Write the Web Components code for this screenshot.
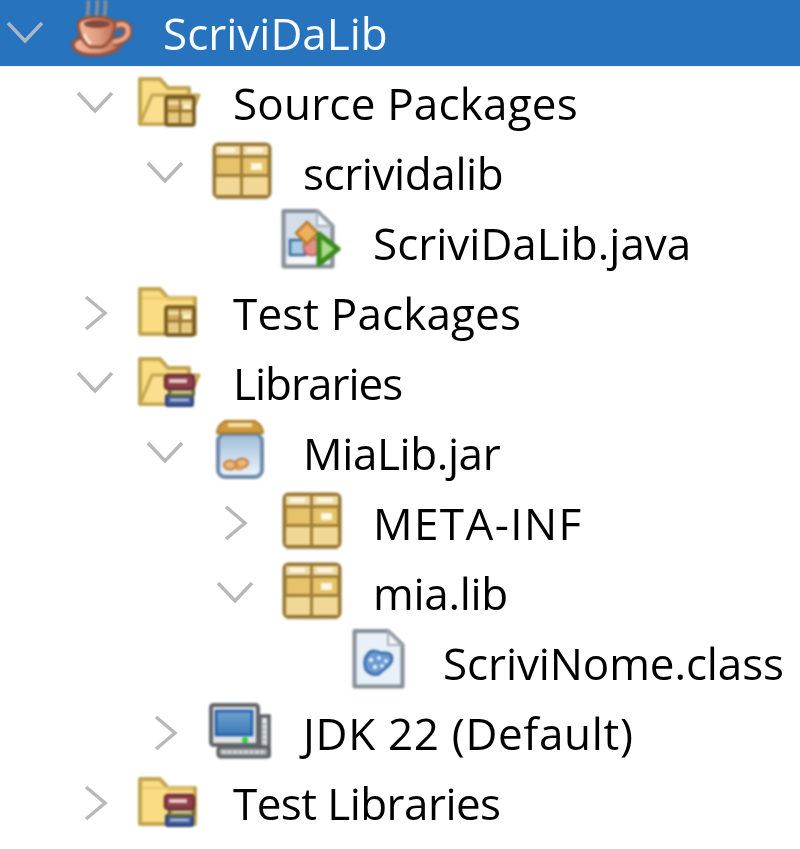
<!DOCTYPE html>
<html lang="it"><head><meta charset="utf-8"><title>ScriviDaLib</title>
<style>
html,body{margin:0;padding:0;background:#fff}
body{width:800px;height:849px;overflow:hidden;font-family:"Open Sans","Noto Sans",sans-serif}
</style></head>
<body>
<project-tree>
<tree-row depth="0" state="open" icon="cup" selected>ScriviDaLib</tree-row>
<tree-row depth="1" state="open" icon="srcopen" ls=".2">Source Packages</tree-row>
<tree-row depth="2" state="open" icon="pkg" ls="-.4">scrividalib</tree-row>
<tree-row depth="3" icon="java">ScriviDaLib.java</tree-row>
<tree-row depth="1" state="closed" icon="srcclosed" ls=".15">Test Packages</tree-row>
<tree-row depth="1" state="open" icon="libopen" ls="-1">Libraries</tree-row>
<tree-row depth="2" state="open" icon="jar" ls="-.4">MiaLib.jar</tree-row>
<tree-row depth="3" state="closed" icon="pkg" ls="1.4">META-INF</tree-row>
<tree-row depth="3" state="open" icon="pkg" ls="-.3">mia.lib</tree-row>
<tree-row depth="4" icon="cls" ls="-.1">ScriviNome.class</tree-row>
<tree-row depth="2" state="closed" icon="jdk" ls=".7">JDK 22 (Default)</tree-row>
<tree-row depth="1" state="closed" icon="libclosed" ls="-.55">Test Libraries</tree-row>
</project-tree>
<script>
const miniPkg=`<g><rect x="28" y="27" width="28" height="28" rx="2" fill="#d2ab58" stroke="#755820" stroke-width="3.500"/><path d="M30 33h24" stroke="#f0dfb0" stroke-width="3.500"/><path d="M42 28v26M29 41h26" stroke="#8f7130" stroke-width="2"/><rect x="45" y="35" width="8" height="4" fill="#fff3d0"/><rect x="30" y="43" width="11" height="10" fill="#e6c880"/><rect x="43" y="43" width="11" height="10" fill="#e6c880"/></g>`;
const books=`<g><rect x="28" y="45" width="27" height="11" rx="2" fill="#3f5c9c" stroke="#263c72" stroke-width="2"/><path d="M32 50h19" stroke="#b9c5de" stroke-width="2.500"/><rect x="31" y="38" width="25" height="8" rx="2" fill="#8c8a52" stroke="#5f5e34" stroke-width="2"/><path d="M34 42h19" stroke="#d8d5a8" stroke-width="2"/><rect x="27" y="25" width="29" height="14" rx="3" fill="#8f4049" stroke="#6d2e36" stroke-width="2.500"/><path d="M31 31h18" stroke="#e6c8cb" stroke-width="4"/></g>`;
const closedF=`<path d="M2 54V9h20l8 9h27v36z" fill="#fadc82" stroke="#c2a552" stroke-width="4" stroke-linejoin="round"/><path d="M4 18h51" stroke="#e9ca72" stroke-width="2"/>`;
const openF=`<path d="M2 54V9h20l8 9h21v36z" fill="#fadc82" stroke="#c2a552" stroke-width="4" stroke-linejoin="round"/><path d="M2 54 L14 25 H61 L49 54Z" fill="#fbdf8e" stroke="#c2a552" stroke-width="3" stroke-linejoin="round"/>`;
const ICONS={
cup:`<defs><linearGradient id="c" x1="0" x2="1" y1="0" y2="0"><stop offset="0" stop-color="#f2b79d"/><stop offset=".55" stop-color="#e09c80"/><stop offset="1" stop-color="#bb6d50"/></linearGradient></defs>
<path d="M20 18c-2-5 2-9 0-18M29 18c-2-6 2-10 0-18M37 18c-2-5 2-9 0-18" fill="none" stroke="#8a8f96" stroke-width="3.500"/>
<path d="M5 45c0-5 6-8 14-8h18c9 0 15 3 15 7 0 6-12 11-25 11S5 51 5 45z" fill="url(#c)" stroke="#9a5238" stroke-width="3.500"/>
<path d="M46 27c6-5 14-3 14 4 0 8-8 10-15 11" fill="none" stroke="#9a5238" stroke-width="9"/><path d="M46 27c6-5 14-3 14 4 0 8-8 10-15 11" fill="none" stroke="#e6a78c" stroke-width="4.500"/>
<path d="M10 26c-1-6 8-9 18-9s20 3 19 9c-1 9-6 18-13 21H23c-7-3-12-12-13-21z" fill="url(#c)" stroke="#9a5238" stroke-width="3"/>
<ellipse cx="29" cy="24" rx="13" ry="4" fill="#85483a"/><path d="M16 34c2 5 4 8 7 10" stroke="#fadccc" stroke-width="3.500" fill="none"/>`,
srcopen:openF+miniPkg,srcclosed:closedF+miniPkg,libopen:openF+books,libclosed:closedF+books,
pkg:`<path d="M8 58h52" stroke="#cfcac0" stroke-width="3"/><rect x="6.500" y="4.500" width="55" height="52" rx="4" fill="#e6c26a" stroke="#967630" stroke-width="4"/>
<rect x="8" y="6" width="52" height="10" fill="#efdaa6"/><path d="M12 10h15M39 10h16" stroke="#fff6e2" stroke-width="4.500"/>
<rect x="8" y="36" width="52" height="19" fill="#f1d896"/><path d="M33.500 5v51M7 16.500h54M7 35.500h54" stroke="#a08036" stroke-width="3"/>
<rect x="43" y="23" width="11" height="7" fill="#fff8e2"/>`,
java:`<path d="M5.500 1H39l15.500 15V56.500H5.500z" fill="#d3deea" stroke="#858e98" stroke-width="4" stroke-linejoin="round"/><path d="M9 50h42" stroke="#f4f6f8" stroke-width="8"/><path d="M39 2v14h14z" fill="#f4f6f8" stroke="#a7afb8" stroke-width="2"/>
<rect x="12" y="30" width="15" height="15" fill="#a9cbe6" stroke="#3e6c9a" stroke-width="2.500"/><circle cx="34" cy="37" r="8.500" fill="#e58f8c" stroke="#c45f5f" stroke-width="2"/><path d="M29 12l11 11-11 11-11-11z" fill="#eeb05f" stroke="#b87a28" stroke-width="2.500"/>
<path d="M41 24l19 15-19 15z" fill="#a8dc88" stroke="#3d8a1e" stroke-width="5" stroke-linejoin="round"/>`,
jar:`<defs><linearGradient id="g" x1="0" x2="0" y1="0" y2="1"><stop offset="0" stop-color="#9dbcd9"/><stop offset=".55" stop-color="#c9dcee"/><stop offset="1" stop-color="#eef4fa"/></linearGradient></defs><rect x="10" y="14" width="44" height="43" rx="7" fill="url(#g)" stroke="#6f8aa8" stroke-width="4"/>
<path d="M9 13c0-5 3-9 8-12h30c5 3 8 7 8 12z" fill="#cf9a3c" stroke="#a97a24" stroke-width="2"/><path d="M20 5h24" stroke="#f3e0b0" stroke-width="4"/>
<ellipse cx="22" cy="45" rx="6" ry="4.500" fill="#eab67a" stroke="#c47d35" stroke-width="2"/><ellipse cx="34" cy="43" rx="6" ry="4.500" fill="#eab67a" stroke="#c47d35" stroke-width="2"/><ellipse cx="31" cy="48" rx="4" ry="2.500" fill="#d99b59"/>`,
cls:`<path d="M6.500 1H40l14.500 14V56.500H6.500z" fill="#e8f0f8" stroke="#858e98" stroke-width="4" stroke-linejoin="round"/><path d="M40 2v13h13z" fill="#f6f7f9" stroke="#a7afb8" stroke-width="2"/>
<path d="M20 24c3-5 10-3 13-1 5-1 12 0 11 7-1 6-9 9-13 14-5 2-13-1-14-7-1-5 0-10 3-13z" fill="#6a9ad2" stroke="#3a6caa" stroke-width="2.500"/><g fill="#e4effa"><circle cx="23" cy="30" r="2.200"/><circle cx="31" cy="28" r="2"/><circle cx="38" cy="31" r="2"/><circle cx="27" cy="37" r="2.200"/><circle cx="34" cy="36" r="2"/></g>`,
jdk:`<defs><linearGradient id="s" x1="0" x2="0" y1="0" y2="1"><stop offset="0" stop-color="#6ea1d0"/><stop offset="1" stop-color="#3f7ab6"/></linearGradient></defs><path d="M52 16h9v40h-9z" fill="#e2e4e6" stroke="#5e6265" stroke-width="3.500"/><path d="M56 23v26" stroke="#b0b4b8" stroke-width="3" stroke-dasharray="3 2"/>
<rect x="10" y="47" width="51" height="10" rx="3" fill="#9fa3a6" stroke="#56595c" stroke-width="3"/><path d="M14 52h42" stroke="#e3e5e6" stroke-width="2.500" stroke-dasharray="4 1.500"/>
<rect x="3" y="5" width="47" height="40" rx="2.500" fill="#e0e2e4" stroke="#62666a" stroke-width="4"/><rect x="8" y="11" width="36" height="24" fill="url(#s)" stroke="#1f5ea8" stroke-width="2.500"/><circle cx="37" cy="40" r="3" fill="#22d43f"/>`
};
class ProjectTree extends HTMLElement{
  constructor(){super();this.attachShadow({mode:"open"}).innerHTML=`<style>:host{display:flex;flex-direction:column;width:800px}</style><slot></slot>`;}
}
class TreeRow extends HTMLElement{
  constructor(){super();this.attachShadow({mode:"open"});}
  connectedCallback(){
    const d=+this.getAttribute("depth")||0,st=this.getAttribute("state"),ic=this.getAttribute("icon");
    const sel=this.hasAttribute("selected"),ls=this.getAttribute("ls")||0;
    const chev=st==="open"?`<path d="M8 23l17 18 17-18"/>`:st==="closed"?`<path d="M16 17l19 16-19 16"/>`:"";
    this.shadowRoot.innerHTML=`<style>
    :host{display:block;height:70px;font:44px/70px "Open Sans","Noto Sans",sans-serif;color:${sel?"#f8fbff":"#000"};${sel?"background:linear-gradient(#2773be 66px,#dfe9f3 66px,#fff 67px);":""}}
    .r{display:flex;align-items:flex-start;height:70px;padding-left:${d*70}px}
    svg{display:block;flex:none;overflow:visible}
    .c{width:50px;height:70px;fill:none;stroke:${sel?"#a9b8c6":"#b8b8b8"};stroke-width:3.500;filter:blur(.5px)}
    .i{width:70px;height:70px;margin-left:18px;filter:blur(1px)}
    .t{margin-left:25px;white-space:nowrap;margin-top:-2px;letter-spacing:${ls}px;filter:blur(.5px)}
    </style><div class="r"><svg class="c" viewBox="0 0 50 70">${chev}</svg><svg class="i" viewBox="0 0 70 70">${ICONS[ic]}</svg><span class="t"><slot></slot></span></div>`;
  }
}
customElements.define("project-tree",ProjectTree);
customElements.define("tree-row",TreeRow);
</script>
</body></html>
